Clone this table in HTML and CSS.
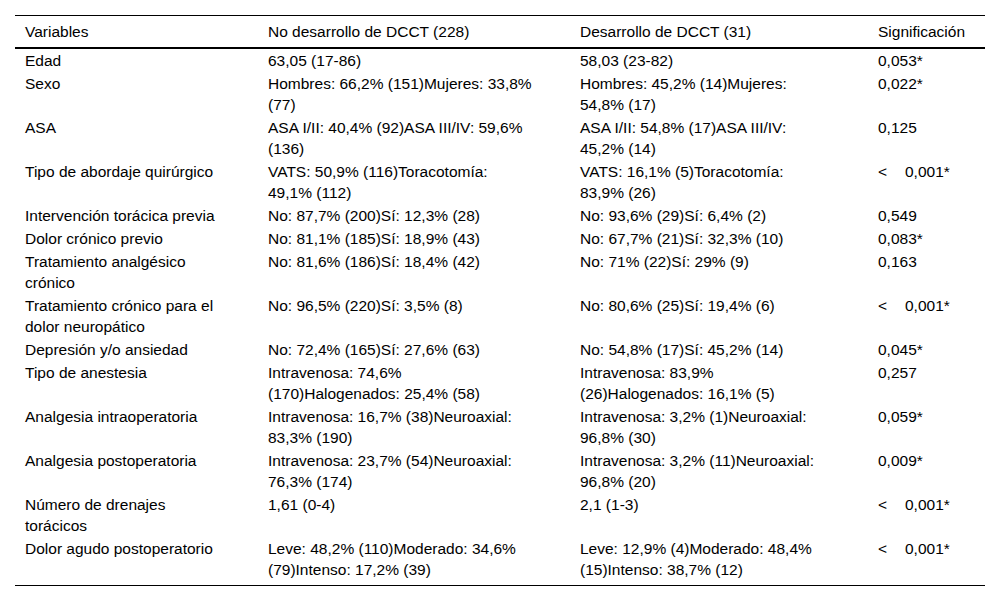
FILE: index.html
```html
<!DOCTYPE html>
<html lang="es">
<head>
<meta charset="utf-8">
<title>Tabla</title>
<link rel="stylesheet" href="styles.css">
</head>
<body>
<table class="data">
  <colgroup>
    <col class="c1">
    <col class="c2">
    <col class="c3">
    <col class="c4">
  </colgroup>
  <thead>
    <tr>
      <th>Variables</th>
      <th>No desarrollo de DCCT (228)</th>
      <th>Desarrollo de DCCT (31)</th>
      <th>Significación</th>
    </tr>
  </thead>
  <tbody>
    <tr><td>Edad</td><td>63,05 (17-86)</td><td>58,03 (23-82)</td><td>0,053*</td></tr>
    <tr><td>Sexo</td><td>Hombres: 66,2% (151)Mujeres: 33,8% (77)</td><td>Hombres: 45,2% (14)Mujeres: 54,8% (17)</td><td>0,022*</td></tr>
    <tr><td>ASA</td><td>ASA I/II: 40,4% (92)ASA III/IV: 59,6% (136)</td><td>ASA I/II: 54,8% (17)ASA III/IV: 45,2% (14)</td><td>0,125</td></tr>
    <tr><td>Tipo de abordaje quirúrgico</td><td>VATS: 50,9% (116)Toracotomía: 49,1% (112)</td><td>VATS: 16,1% (5)Toracotomía: 83,9% (26)</td><td><span class="lt">&lt;</span>0,001*</td></tr>
    <tr><td>Intervención torácica previa</td><td>No: 87,7% (200)Sí: 12,3% (28)</td><td>No: 93,6% (29)Sí: 6,4% (2)</td><td>0,549</td></tr>
    <tr><td>Dolor crónico previo</td><td>No: 81,1% (185)Sí: 18,9% (43)</td><td>No: 67,7% (21)Sí: 32,3% (10)</td><td>0,083*</td></tr>
    <tr><td>Tratamiento analgésico crónico</td><td>No: 81,6% (186)Sí: 18,4% (42)</td><td>No: 71% (22)Sí: 29% (9)</td><td>0,163</td></tr>
    <tr><td>Tratamiento crónico para el dolor neuropático</td><td>No: 96,5% (220)Sí: 3,5% (8)</td><td>No: 80,6% (25)Sí: 19,4% (6)</td><td><span class="lt">&lt;</span>0,001*</td></tr>
    <tr><td>Depresión y/o ansiedad</td><td>No: 72,4% (165)Sí: 27,6% (63)</td><td>No: 54,8% (17)Sí: 45,2% (14)</td><td>0,045*</td></tr>
    <tr><td>Tipo de anestesia</td><td>Intravenosa: 74,6% (170)Halogenados: 25,4% (58)</td><td>Intravenosa: 83,9% (26)Halogenados: 16,1% (5)</td><td>0,257</td></tr>
    <tr><td>Analgesia intraoperatoria</td><td>Intravenosa: 16,7% (38)Neuroaxial: 83,3% (190)</td><td>Intravenosa: 3,2% (1)Neuroaxial: 96,8% (30)</td><td>0,059*</td></tr>
    <tr><td>Analgesia postoperatoria</td><td>Intravenosa: 23,7% (54)Neuroaxial: 76,3% (174)</td><td>Intravenosa: 3,2% (11)Neuroaxial: 96,8% (20)</td><td>0,009*</td></tr>
    <tr><td>Número de drenajes torácicos</td><td>1,61 (0-4)</td><td>2,1 (1-3)</td><td><span class="lt">&lt;</span>0,001*</td></tr>
    <tr class="last"><td>Dolor agudo postoperatorio</td><td>Leve: 48,2% (110)Moderado: 34,6% (79)Intenso: 17,2% (39)</td><td>Leve: 12,9% (4)Moderado: 48,4% (15)Intenso: 38,7% (12)</td><td><span class="lt">&lt;</span>0,001*</td></tr>
  </tbody>
</table>
</body>
</html>
```

FILE: styles.css
```css
html, body {
  margin: 0;
  padding: 0;
  background: #ffffff;
}

body {
  padding: 15px 15px 0 15px;
  font-family: "Liberation Sans", Arial, sans-serif;
  font-size: 15.5px;
  line-height: 21px;
  color: #000000;
}

.data {
  width: 970px;
  table-layout: fixed;
  border-collapse: collapse;
  border-top: 1px solid #000;
  border-bottom: 1px solid #000;
}

.c1 { width: 243px; }
.c2 { width: 312px; }
.c3 { width: 298px; }
.c4 { width: 117px; }

.data th,
.data td {
  text-align: left;
  vertical-align: top;
  font-weight: normal;
  padding: 1px 6px 1px 10px;
}

.data th {
  padding-top: 5px;
  padding-bottom: 5px;
  border-bottom: 2px solid #000;
}

.data td:nth-child(1),
.data th:nth-child(1) { padding-right: 35px; }
.data td:nth-child(2),
.data th:nth-child(2) { padding-right: 36.8px; }
.data td:nth-child(3),
.data th:nth-child(3) { padding-right: 49px; }

.data tr.last td {
  padding-bottom: 5px;
}

.lt {
  display: inline-block;
  width: 27px;
}
```
